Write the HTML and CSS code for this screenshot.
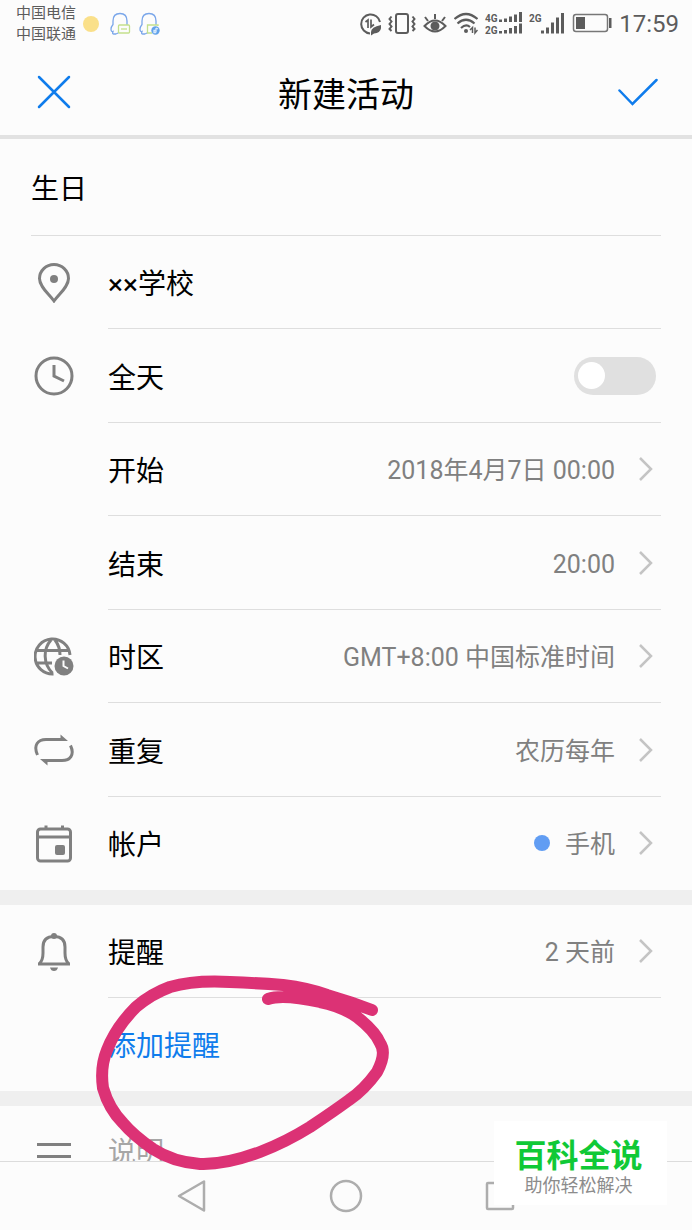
FILE: index.html
```html
<!DOCTYPE html>
<html lang="zh-CN">
<head>
<meta charset="utf-8">
<meta name="viewport" content="width=device-width, initial-scale=1">
<title>新建活动</title>
<link rel="stylesheet" href="styles.css">
</head>
<body>
<div class="status">
  <div class="carriers"><span>中国电信</span><span>中国联通</span></div>
  <span class="sun"></span>
  <svg class="penguin" width="22" height="24" viewBox="0 0 22 24" fill="none" stroke-width="1.3">
    <path stroke="#7ba7ea" d="M7 22H4.500Q3 22 4 19.500Q2 20 2 17Q2 15 4 12.500V9C4 4 7 1.500 11 1.500S18 4 18 9V13M7 22L10 20.500"/>
    <rect x="9.500" y="13" width="11" height="8" rx="1" fill="#fcfcfc" stroke="#c3e08c"/><path stroke="#c3e08c" d="M12 17h6"/>
  </svg>
  <svg class="penguin" width="22" height="24" viewBox="0 0 22 24" fill="none" stroke-width="1.3">
    <path stroke="#7ba7ea" d="M7 22H4.500Q3 22 4 19.500Q2 20 2 17Q2 15 4 12.500V9C4 4 7 1.500 11 1.500S18 4 18 9V13M7 22L10 20.500"/>
    <path stroke="#c3e08c" d="M20 14V13H9.500V21H14"/><circle cx="17.500" cy="18.500" r="4.200" fill="#62a3ea"/><path stroke="#d9eafc" d="M18 16v4.500M18 18.500h-2v2h2M18 16l2 1"/>
  </svg>
  <div class="indicators">
    <svg width="22" height="24" viewBox="0 0 22 24" fill="none" stroke="#5c5c5c" stroke-width="2">
      <path d="M21 10A9.500 9.500 0 1 0 11 21.400"/><path stroke-width="1.700" d="M6.500 10L9 8V16M12 7.500V15L15 12.500"/><path fill="#5c5c5c" stroke="none" d="M12 20Q12 15 22 13Q23 21 15 21.500L12 23.500Z"/>
    </svg>
    <svg width="28" height="24" viewBox="0 0 28 24" fill="none" stroke="#5c5c5c" stroke-width="2">
      <rect x="8" y="2" width="12" height="19" rx="2"/><path d="M3.500 4.500L1.500 7L3.500 9.500L1.500 12L3.500 14.500L1.500 17L3.500 19M24.500 4.500L26.500 7L24.500 9.500L26.500 12L24.500 14.500L26.500 17L24.500 19"/>
    </svg>
    <svg width="24" height="24" viewBox="0 0 24 24" fill="none" stroke="#5c5c5c" stroke-width="2">
      <path d="M1.500 14Q12 3 22.500 14Q12 25 1.500 14ZM12 7V2M5 9L2 5M19 9L22 5"/><circle cx="12" cy="14" r="3.500" fill="#5c5c5c"/>
    </svg>
    <svg width="24" height="24" viewBox="0 0 24 24" fill="none" stroke="#5c5c5c" stroke-width="2.200">
      <path d="M0.500 7Q12-3 23.500 7M3.500 11.500Q12 4 20.500 11.500M7 16Q12 11.500 16 15"/><circle cx="12" cy="19" r="2" fill="#5c5c5c" stroke="none"/><path stroke-width="1.500" d="M16 18L18.500 15.500V21M21 15.500V21L23.500 18"/>
    </svg>
    <svg class="network" width="37" height="24" viewBox="0 0 37 24">
      <text x="0" y="10">4G</text><text x="0" y="22">2G</text>
      <path stroke="#5c5c5c" stroke-width="3" d="M15.500 10V7.500M20.500 10V6.500M25.500 10V4.500M30.500 10V2.500M35.500 10V0M15.500 21.500V19M20.500 21.500V18M25.500 21.500V16M30.500 21.500V14M35.500 21.500V11.500"/>
    </svg>
    <svg class="network" width="36" height="24" viewBox="0 0 36 24">
      <text x="0" y="10">2G</text>
      <path stroke="#5c5c5c" stroke-width="3" d="M13.500 21.500V18.500M18.500 21.500V15.500M23.500 21.500V10.500M28.500 21.500V5.500M33.500 21.500V1"/>
    </svg>
    <svg width="40" height="24" viewBox="0 0 40 24" fill="none">
      <rect x="1.500" y="2.500" width="34" height="17" rx="2.500" stroke="#777" stroke-width="1.500"/><path fill="#5c5c5c" d="M4 5h9v12H4zM37 6h2.500v10H37z"/>
    </svg>
    <time class="clock">17:59</time>
  </div>
</div>

<header class="header">
  <button class="icon-button" aria-label="关闭"><svg width="40" height="40" viewBox="0 0 40 40"><path d="M5 5L35 35M35 5L5 35"/></svg></button>
  <h1 class="title">新建活动</h1>
  <button class="icon-button" aria-label="保存"><svg width="40" height="40" viewBox="0 0 40 40"><path d="M1.500 18.500L14.500 32L38.500 8"/></svg></button>
</header>

<main class="content">
  <div class="name"><input class="field" type="text" aria-label="活动名称" value="生日"></div>
  <section class="group details">
    <div class="row">
      <svg class="icon" viewBox="0 0 40 40"><path d="M20 38C15 31 5.500 24 5.500 15.500A14.500 14 0 0 1 34.500 15.500C34.500 24 25 31 20 38Z"/><circle class="solid" cx="20" cy="16" r="4"/></svg>
      <div class="line"><input class="field" type="text" aria-label="地点" value="××学校"></div>
    </div>
    <div class="row">
      <svg class="icon" viewBox="0 0 40 40"><circle cx="20" cy="20" r="18"/><path d="M20 9V20L30 25"/></svg>
      <label class="line"><span class="label">全天</span><input class="switch" type="checkbox"></label>
    </div>
    <button class="row">
      <span class="icon"></span>
      <span class="line"><span class="label">开始</span><span class="value">2018年4月7日 00:00</span><svg class="chevron" viewBox="0 0 16 26"><path d="M2 2L13 13L2 24"/></svg></span>
    </button>
    <button class="row">
      <span class="icon"></span>
      <span class="line"><span class="label">结束</span><span class="value">20:00</span><svg class="chevron" viewBox="0 0 16 26"><path d="M2 2L13 13L2 24"/></svg></span>
    </button>
    <button class="row">
      <svg class="icon" viewBox="0 0 40 40"><path d="M19.500 37A17.500 17.500 0 1 1 36 18M18.500 36C9 27 9 12 17 3M21 3C24 7 26 12 26 18M3 13.500H35M3 26H18"/><circle class="solid" cx="30" cy="29" r="9.500"/><path class="hands" d="M29.500 23.500V29L34 31.500"/></svg>
      <span class="line"><span class="label">时区</span><span class="value">GMT+8:00 中国标准时间</span><svg class="chevron" viewBox="0 0 16 26"><path d="M2 2L13 13L2 24"/></svg></span>
    </button>
    <button class="row">
      <svg class="icon" viewBox="0 0 40 40"><path d="M3.500 25C-1 15 4 9.500 12 9.500H28M36.500 15.500C41 25 36 30.500 28 30.500H12"/><path class="solid" d="M26.500 4.500L34 11H26.500ZM13.500 35.500L6 29H13.500Z"/></svg>
      <span class="line"><span class="label">重复</span><span class="value">农历每年</span><svg class="chevron" viewBox="0 0 16 26"><path d="M2 2L13 13L2 24"/></svg></span>
    </button>
    <button class="row">
      <svg class="icon" viewBox="0 0 40 40"><rect x="3.500" y="5" width="33" height="32" rx="3"/><path d="M3.500 13H36.500M12 5V1.500M28.500 5V1.500"/><rect class="solid" x="21" y="21" width="10" height="10" rx="2"/></svg>
      <span class="line"><span class="label">帐户</span><span class="dot"></span><span class="value">手机</span><svg class="chevron" viewBox="0 0 16 26"><path d="M2 2L13 13L2 24"/></svg></span>
    </button>
  </section>
  <section class="group">
    <button class="row">
      <svg class="icon" viewBox="0 0 40 40"><path d="M4 32H36M5.500 31.500Q9 28 9 21V15C9 8 13 4.500 20 4.500S31 8 31 15V21Q31 28 34.500 31.500"/><circle class="solid" cx="20" cy="4" r="3"/><path class="solid" d="M16 35.500H24Q23 39 20 39T16 35.500Z"/></svg>
      <span class="line"><span class="label">提醒</span><span class="value">2 天前</span><svg class="chevron" viewBox="0 0 16 26"><path d="M2 2L13 13L2 24"/></svg></span>
    </button>
    <button class="row">
      <span class="icon"></span>
      <span class="line"><span class="label add">添加提醒</span></span>
    </button>
  </section>
  <section class="group">
    <div class="row">
      <svg class="icon" viewBox="0 0 40 40"><path d="M3 11.500H37M3 23.500H37"/></svg>
      <div class="line"><input class="field" type="text" aria-label="说明" placeholder="说明"></div>
    </div>
  </section>
</main>

<nav class="nav">
  <button aria-label="返回"><svg width="34" height="34" viewBox="0 0 34 34"><path d="M29 2.500V31.500L4 17Z"/></svg></button>
  <button aria-label="主屏幕"><svg width="34" height="34" viewBox="0 0 34 34"><circle cx="17" cy="17" r="15"/></svg></button>
  <button aria-label="最近任务"><svg width="34" height="34" viewBox="0 0 34 34"><rect x="4" y="4" width="26" height="26" rx="1"/></svg></button>
</nav>

<svg class="scribble" width="300" height="200" viewBox="0 0 300 200"><path d="M172 23Q187 18 224 26Q245 30 261 41Q279 55 284 67Q291 77 281 96Q268 114 253 124Q238 135 214 151Q190 166 164 176Q129 189 104 188Q77 186 57 173Q37 159 27 147Q13 133 7 112Q4 91 11 74Q20 51 40 31Q55 18 74 11Q98 4 134 6Q160 7 187 9Q212 12 231 19Q255 26 276 34"/></svg>
<aside class="brand"><strong>百科全说</strong><span>助你轻松解决</span></aside>
</body>
</html>
```
FILE: styles.css
```css
* { box-sizing: border-box; }

body {
  position: relative;
  display: flex;
  flex-direction: column;
  height: 100vh;
  margin: 0;
  overflow: hidden;
  background: #fcfcfc;
  color: #000;
  font-family: Roboto, "Noto Sans CJK SC", sans-serif;
}

button, input { margin: 0; padding: 0; border: 0; background: none; color: inherit; font: inherit; }
svg { display: block; flex: none; }

.status {
  display: flex;
  flex: none;
  align-items: center;
  height: 48px;
  padding: 0 13px 0 16px;
  color: #5c5c5c;
}
.carriers { display: grid; font-size: 15px; line-height: 21px; }
.sun { width: 16px; height: 16px; margin-left: 7px; border-radius: 50%; background: #fae08a; }
.penguin { margin-left: 10px; }
.penguin + .penguin { margin-left: 7px; }
.indicators { display: flex; gap: 7px; align-items: center; margin-left: auto; }
.network text { fill: #5c5c5c; font-size: 10px; font-weight: 700; }
.clock { font-size: 24px; line-height: 24px; }

.header {
  display: flex;
  flex: none;
  align-items: center;
  justify-content: space-between;
  height: 91px;
  padding: 0 34px;
  border-bottom: 4px solid #e2e2e2;
}
.title { margin: 0; padding-top: 6px; font-size: 34px; font-weight: 400; line-height: 48px; }
.icon-button { height: 40px; }
.icon-button path { fill: none; stroke: #0f7cec; stroke-width: 2.500; stroke-linecap: round; }

.content { flex: 1; min-height: 0; overflow: hidden; }
.name { height: 97px; margin: 0 31px; border-bottom: 1px solid #dedede; }
.field { width: 100%; height: 100%; outline: 0; font-size: 28px; }
.field::placeholder { color: #a6a6a6; opacity: 1; }

.group + .group { border-top: 15px solid #efefef; }
.row {
  display: flex;
  align-items: center;
  width: 100%;
  height: 93px;
  padding: 0 31px 0 34px;
  text-align: left;
}
.details .row:nth-child(even) { height: 94px; }
.icon { flex: none; width: 40px; height: 40px; margin-right: 34px; fill: none; stroke: #808080; stroke-width: 3; }
.icon .solid { fill: #808080; stroke: none; }
.icon .hands { stroke: #fcfcfc; stroke-width: 2; }
.line {
  display: flex;
  flex: 1;
  align-items: center;
  height: 100%;
  border-bottom: 1px solid #dedede;
}
.row:last-child .line { border-bottom-color: transparent; }
.label { margin-right: auto; font-size: 28px; }
.add { color: #0f7cec; }
.value { padding-top: 4px; color: #808080; font-size: 25px; line-height: 36px; }
.chevron { width: 16px; height: 26px; margin: 0 7px 0 23px; fill: none; stroke: #c4c4c4; stroke-width: 2.500; }
.dot { width: 16px; height: 16px; margin-right: 15px; border-radius: 50%; background: #619df3; }

.switch {
  display: flex;
  align-items: center;
  width: 82px;
  height: 38px;
  margin-right: 5px;
  padding-left: 4px;
  border-radius: 19px;
  background: #e0e0e0;
  appearance: none;
}
.switch::before { width: 27px; height: 27px; border-radius: 50%; background: #fff; content: ""; }
.switch:checked { justify-content: flex-end; background: #0f7cec; }

.nav {
  display: flex;
  flex: none;
  justify-content: center;
  gap: 120px;
  height: 69px;
  border-top: 1px solid #dcdcdc;
}
.nav svg { fill: none; stroke: #adadad; stroke-width: 2.500; stroke-linejoin: round; }

.scribble { position: absolute; top: 976px; left: 96px; overflow: visible; pointer-events: none; }
.scribble path { fill: none; stroke: #dc3275; stroke-width: 12; stroke-linecap: round; stroke-linejoin: round; }

.brand {
  position: absolute;
  right: 25px;
  bottom: 25px;
  display: grid;
  justify-items: center;
  align-content: end;
  width: 173px;
  height: 84px;
  padding: 0 4px 7px 0;
  background: #fff;
}
.brand strong { color: #10c936; font-size: 32px; font-weight: 700; line-height: 36px; }
.brand span { color: #8c8c8c; font-size: 18px; line-height: 24px; }
```
